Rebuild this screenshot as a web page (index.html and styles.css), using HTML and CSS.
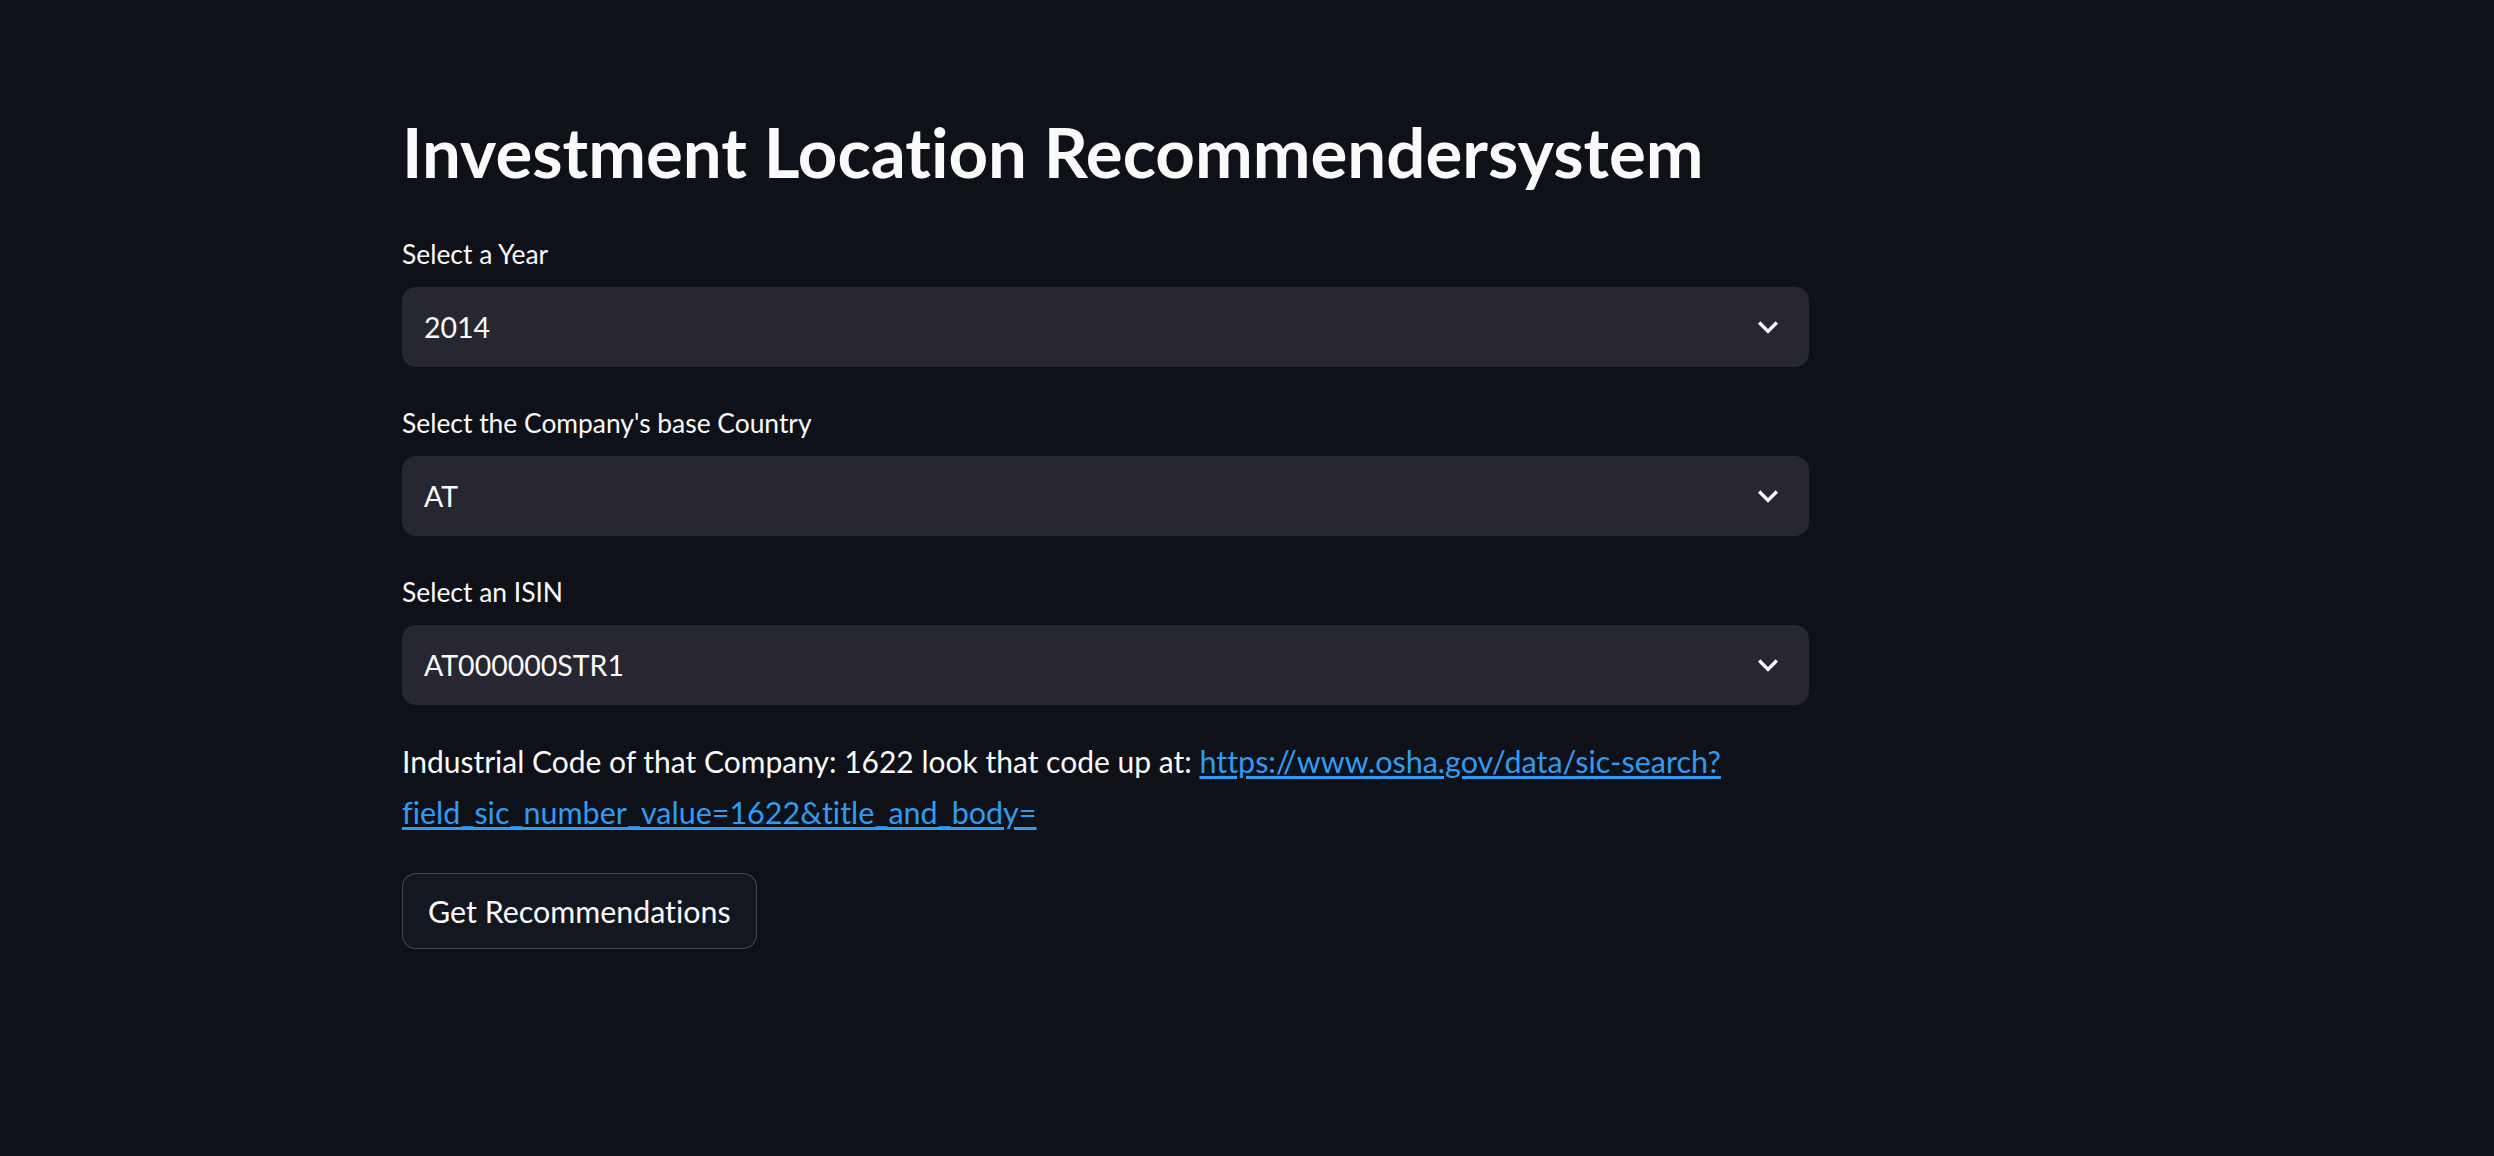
FILE: index.html
```html
<!DOCTYPE html>
<html lang="en">
<head>
<meta charset="utf-8">
<title>Investment Location Recommendersystem</title>
<link rel="stylesheet" href="styles.css">
</head>
<body>
<main class="app">
  <div class="block">
    <h1 class="title">Investment Location Recommendersystem</h1>

    <div class="field">
      <label class="label">Select a Year</label>
      <div class="select">
        <span class="value">2014</span>
        <svg class="chev" viewBox="0 0 24 24" width="40" height="40"><path d="M16.59 8.59L12 13.17 7.41 8.59 6 10l6 6 6-6z" fill="#fafafa"/></svg>
      </div>
    </div>

    <div class="field">
      <label class="label">Select the Company's base Country</label>
      <div class="select">
        <span class="value">AT</span>
        <svg class="chev" viewBox="0 0 24 24" width="40" height="40"><path d="M16.59 8.59L12 13.17 7.41 8.59 6 10l6 6 6-6z" fill="#fafafa"/></svg>
      </div>
    </div>

    <div class="field">
      <label class="label">Select an ISIN</label>
      <div class="select">
        <span class="value">AT000000STR1</span>
        <svg class="chev" viewBox="0 0 24 24" width="40" height="40"><path d="M16.59 8.59L12 13.17 7.41 8.59 6 10l6 6 6-6z" fill="#fafafa"/></svg>
      </div>
    </div>

    <p class="text">Industrial Code of that Company: 1622 look that code up at: <a class="link" href="#">https://www.osha.gov/data/sic-search?field_sic_number_value=1622&amp;title_and_body=</a></p>

    <button class="btn" type="button">Get Recommendations</button>
  </div>
</main>
</body>
</html>
```
FILE: styles.css
```css
html, body {
  margin: 0;
  padding: 0;
  background: #0e1117;
}
.app {
  min-height: 100vh;
  background: #0e1117;
  color: #fafafa;
  font-family: Lato, "Noto Sans", sans-serif;
  font-variant-ligatures: none;
}
.block {
  width: 1407px;
  margin-left: 402px;
  padding-top: 111px;
  display: flex;
  flex-direction: column;
  align-items: flex-start;
}
.title {
  margin: 0;
  font-size: 69px;
  font-weight: 700;
  line-height: 1.2;
  letter-spacing: 0;
  color: #fafafa;
}
.field {
  width: 100%;
  display: flex;
  flex-direction: column;
}
.title + .field {
  margin-top: 42px;
}
.field + .field {
  margin-top: 38px;
}
.label {
  font-size: 26.4px;
  line-height: 37px;
  height: 37px;
  margin-bottom: 14px;
  color: #fafafa;
}
.select {
  height: 80px;
  box-sizing: border-box;
  background: #262730;
  border-radius: 14px;
  display: flex;
  align-items: center;
  justify-content: space-between;
  padding: 0 21px 0 22px;
}
.value {
  font-size: 28.5px;
  color: #fafafa;
}
.chev {
  display: block;
}
.text {
  margin: 31px 0 0;
  font-size: 30px;
  line-height: 51px;
  color: #fafafa;
}
.link {
  font-size: 30.5px;
  color: #2f9cf4;
  text-decoration: underline;
  text-decoration-thickness: 3px;
  text-underline-offset: 3px;
}
.btn {
  margin-top: 35px;
  height: 76px;
  box-sizing: border-box;
  padding: 0 25px;
  background: #131720;
  border: 1.5px solid rgba(250, 250, 250, 0.22);
  border-radius: 14px;
  color: #fafafa;
  font-family: Lato, "Noto Sans", sans-serif;
  font-variant-ligatures: none;
  font-size: 30.4px;
  line-height: 1;
  cursor: pointer;
}
```
